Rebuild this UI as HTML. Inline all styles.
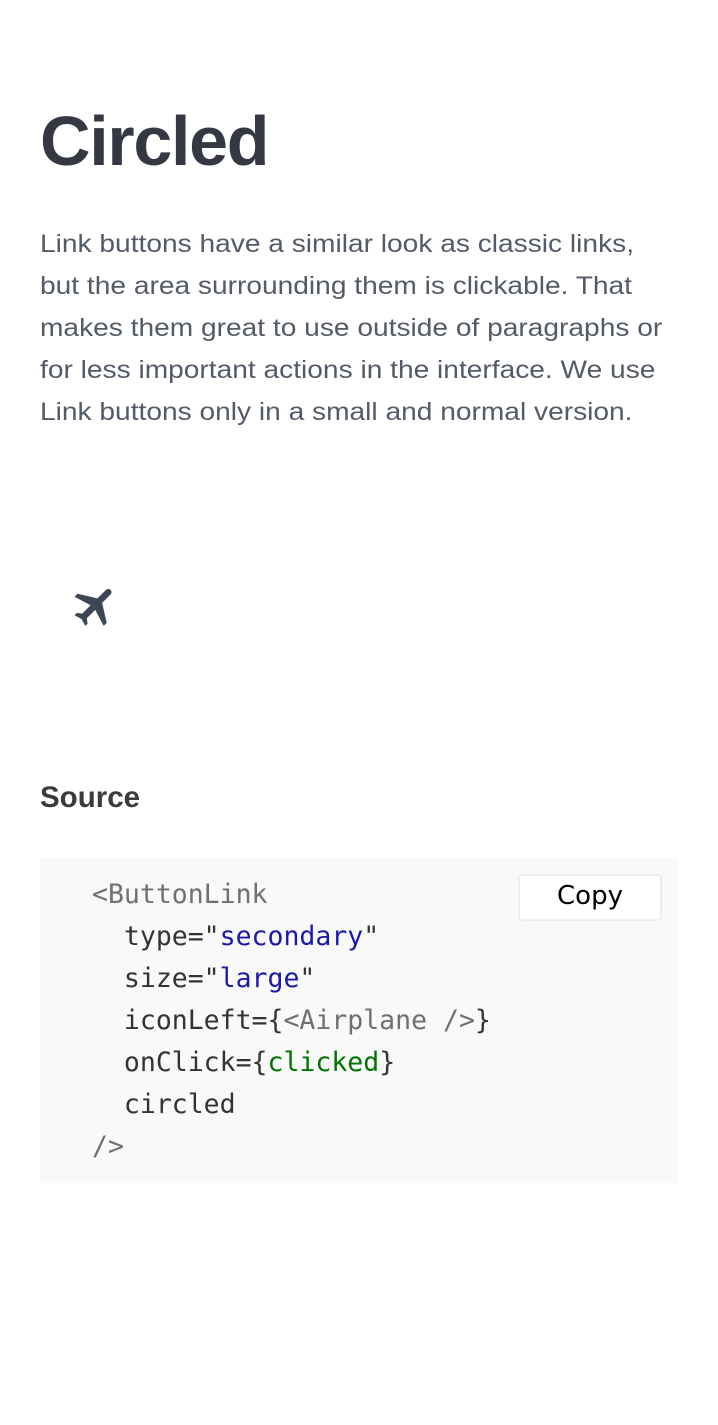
<!DOCTYPE html>
<html><head><meta charset="utf-8"><style>
body{margin:0;width:718px;height:1425px;background:#fff;font-family:"Liberation Sans",sans-serif;position:relative;overflow:hidden}
h1{position:absolute;left:40px;top:96px;margin:0;font-size:70px;font-weight:bold;color:#343842;letter-spacing:-1.3px;line-height:90px}
p{position:absolute;left:40px;top:223px;margin:0;font-size:25px;line-height:42px;color:#545b68;white-space:nowrap;transform:scaleX(1.125);transform-origin:0 0}
.plane{position:absolute;left:70px;top:580px;width:52px;height:52px}
h2{position:absolute;left:40px;top:781px;margin:0;font-size:29.5px;font-weight:bold;color:#3b3b3b}
.code{position:absolute;left:40px;top:858px;width:638px;height:325px;background:#f9f9f9}
pre{position:absolute;left:52px;top:16px;margin:0;font-family:"DejaVu Sans Mono","Liberation Mono",monospace;font-size:26.5px;line-height:42px;color:#333}
.g{color:#707070}.b{color:#1a1aa6}.gr{color:#007400}
.copy{position:absolute;left:478px;top:16px;width:144px;height:47px;box-sizing:border-box;background:#fff;border:2px solid #eee;border-radius:4px;font-family:"DejaVu Sans",sans-serif;font-size:26px;line-height:41px;text-align:center;color:#000}
</style></head><body>
<h1>Circled</h1>
<p>Link buttons have a similar look as classic links,<br>but the area surrounding them is clickable. That<br>makes them great to use outside of paragraphs or<br>for less important actions in the interface. We use<br>Link buttons only in a small and normal version.</p>
<svg class="plane" viewBox="0 0 24 24"><g transform="rotate(45 12 12)"><path fill="#3c4654" d="M21 16v-2l-8-5V3.5c0-.83-.67-1.5-1.5-1.5S10 2.67 10 3.5V9l-8 5v2l8-2.5V19l-2 1.5V22l3.5-1 3.5 1v-1.5L13 19v-5.5l8 2.5z"/></g></svg>
<h2>Source</h2>
<div class="code"><pre><span class="g">&lt;ButtonLink</span>
  type="<span class="b">secondary</span>"
  size="<span class="b">large</span>"
  iconLeft={<span class="g">&lt;Airplane /&gt;</span>}
  onClick={<span class="gr">clicked</span>}
  circled
<span class="g">/&gt;</span></pre><div class="copy">Copy</div></div>
</body></html>
